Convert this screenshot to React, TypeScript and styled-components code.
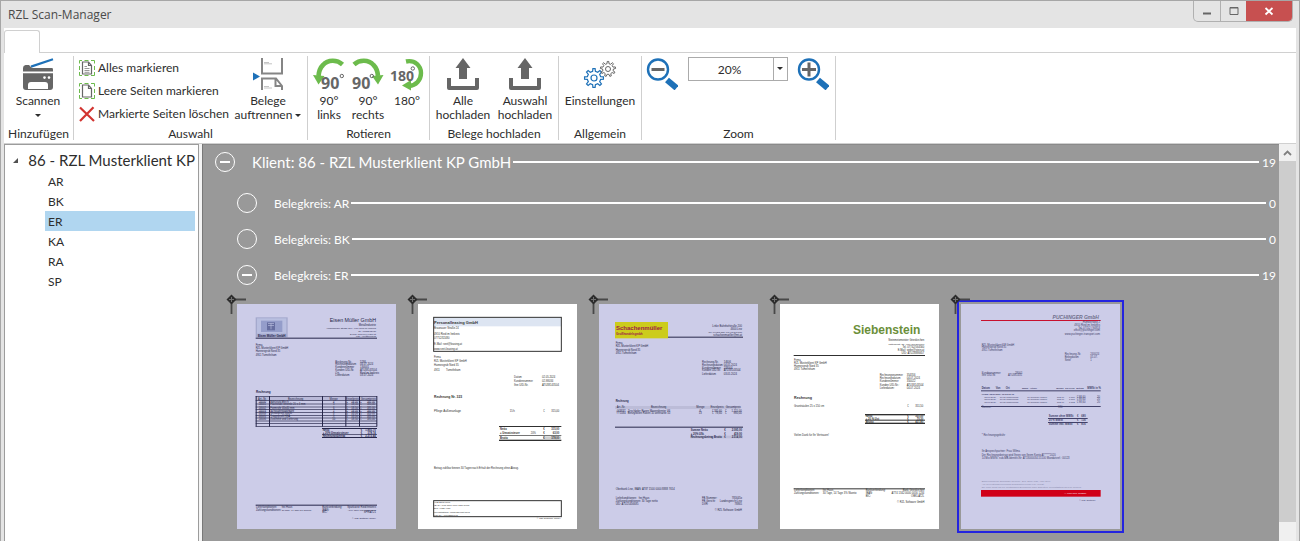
import React from 'react';
import styled, { createGlobalStyle, css } from 'styled-components';

const ink = '#2d2d2d';
const grey = '#666666';
const blue = '#1e71b8';
const green = '#6cbb4c';

const GlobalStyle = createGlobalStyle`
  *, *::before, *::after { box-sizing: border-box; }
  body {
    margin: 0;
    font-family: Lato, "Open Sans", sans-serif;
    font-size: 12px;
    color: ${ink};
    overflow: hidden;
  }
  button, select { font: inherit; color: inherit; }
`;

/* ---------- window frame ---------- */

const Window = styled.div`
  display: flex;
  flex-direction: column;
  height: 100vh;
  padding: 0 3px;
  background: #e4e4e4;
  border: 1px solid #a6a6a6;
  border-bottom: 0;
`;

const TitleBar = styled.header`
  display: flex;
  justify-content: space-between;
  align-items: flex-start;
  height: 27px;
  flex: none;
  padding: 0 3px 0 4px;
`;

const Title = styled.h1`
  margin: 0;
  font-family: "Open Sans", sans-serif;
  font-size: 12px;
  font-weight: 400;
  line-height: 28px;
  color: #4a4a4a;
`;

const WindowButtons = styled.div`
  display: flex;
  border: 1px solid #b0b0b0;
  border-top: 0;
  border-radius: 0 0 5px 5px;
  overflow: hidden;
`;

const WindowButton = styled.button<{ $close?: boolean }>`
  display: grid;
  place-items: center;
  width: ${(p) => (p.$close ? 46 : 26)}px;
  height: 20px;
  padding: 0;
  border: 0;
  border-left: ${(p) => (p.$close ? '0' : '1px solid #b0b0b0')};
  background: ${(p) => (p.$close ? '#c75050' : 'transparent')};
  &:first-child { border-left: 0; }
`;

/* ---------- ribbon ---------- */

const TabStrip = styled.nav`
  display: flex;
  align-items: flex-end;
  flex: none;
  height: 25px;
  background: #fff;
  &::after {
    content: '';
    flex: 1;
    border-bottom: 1px solid #d0d0d0;
  }
`;

const Tab = styled.button`
  width: 36px;
  height: 23px;
  padding: 0;
  border: 1px solid #d0d0d0;
  border-bottom: 0;
  border-radius: 3px 3px 0 0;
  background: #fff;
`;

const Ribbon = styled.div`
  display: flex;
  flex: none;
  padding: 3px 0;
  background: #fff;
  border-bottom: 1px solid #d0d0d0;
`;

const Group = styled.section<{ $width: number }>`
  display: flex;
  flex-direction: column;
  flex: 0 0 ${(p) => p.$width}px;
  min-width: 0;
  height: 84px;
  border-right: 1px solid #cfcfcf;
`;

const GroupBody = styled.div<{ $gap?: number }>`
  display: flex;
  flex: 1;
  gap: ${(p) => p.$gap ?? 0}px;
  align-items: flex-start;
  padding: 2px 2px 0;
`;

const GroupLabel = styled.h2`
  margin: 0;
  font-size: 12px;
  font-weight: 400;
  line-height: 12px;
  text-align: center;
  white-space: nowrap;
`;

const LargeButton = styled.button<{ $width: number }>`
  display: flex;
  flex-direction: column;
  align-items: center;
  gap: 4px;
  flex: 0 0 ${(p) => p.$width}px;
  min-width: 0;
  padding: 0;
  border: 0;
  background: none;
  line-height: 14px;
  white-space: nowrap;
  svg { display: block; overflow: visible; }
`;

const Caption = styled.span`
  display: flex;
  flex-direction: column;
  align-items: center;
`;

const CaptionLine = styled.span`
  display: flex;
  align-items: center;
  justify-content: center;
  gap: 3px;
  min-height: 14px;
`;

const SmallButtons = styled.div`
  display: flex;
  flex-direction: column;
  flex: 0 0 158px;
  margin-top: -2px;
`;

const SmallButton = styled.button`
  display: flex;
  align-items: center;
  gap: 3px;
  height: 23px;
  padding: 0 0 0 3px;
  border: 0;
  background: none;
  white-space: nowrap;
`;

const ZoomTools = styled.div`
  display: flex;
  flex: 1;
  align-items: flex-start;
  justify-content: space-between;
  padding: 0 4px 0 2px;
`;

const IconButton = styled.button`
  padding: 0;
  border: 0;
  background: none;
  svg { display: block; }
`;

const Combo = styled.label`
  display: grid;
  grid-template-columns: 1fr 14px;
  width: 100px;
  height: 24px;
  margin-top: -1px;
  border: 1px solid #ababab;
  background: #fff;
`;

const ComboSelect = styled.select`
  grid-area: 1 / 1 / 2 / 3;
  appearance: none;
  width: 100%;
  padding: 0 16px 0 0;
  border: 0;
  background: none;
  text-align: center;
  text-align-last: center;
`;

const ComboArrow = styled.span`
  grid-area: 1 / 2;
  display: grid;
  place-items: center;
  padding-bottom: 2px;
  border-left: 1px solid #ababab;
  pointer-events: none;
`;

const Caret = styled.span`
  border: 3px solid transparent;
  border-top-color: ${ink};
  border-bottom: 0;
`;

/* ---------- body ---------- */

const Main = styled.main`
  display: flex;
  flex: 1;
  gap: 3px;
  min-height: 0;
  background: #f4f4f4;
`;

const TreePanel = styled.aside`
  flex: 0 0 195px;
  min-width: 0;
  padding: 4px 3px 0 0;
  background: #fff;
  border: 1px solid #9c9c9c;
  border-bottom: 0;
`;

const TreeRoot = styled.div`
  display: flex;
  align-items: center;
  gap: 10px;
  height: 22px;
  padding: 0 0 1px 8px;
  font-size: 15px;
  white-space: nowrap;
`;

const TreeList = styled.ul`
  margin: 0;
  padding: 0 0 0 40px;
  list-style: none;
`;

const TreeItem = styled.li<{ $selected?: boolean }>`
  height: 20px;
  padding-left: 3px;
  line-height: 21px;
  ${(p) => p.$selected && css`background: #b0d6f0;`}
`;

const Viewer = styled.div`
  display: flex;
  flex: 1;
  min-width: 0;
  background: #999;
  border-left: 1px solid #787878;
  box-shadow: inset 0 1px #8a8a8a;
`;

const Canvas = styled.div`
  flex: 1;
  min-width: 0;
  overflow: hidden;
  padding: 0 3px 0 12px;
  color: #fff;
`;

const SectionRow = styled.div<{ $root?: boolean }>`
  display: flex;
  align-items: center;
  height: 36px;
  margin-bottom: ${(p) => (p.$root ? 5 : 0)}px;
  padding-left: ${(p) => (p.$root ? 0 : 22)}px;
  white-space: nowrap;
`;

const Expander = styled.button`
  display: grid;
  place-items: center;
  flex: none;
  width: 20px;
  height: 20px;
  padding: 0;
  border: 1px solid #fff;
  border-radius: 50%;
  background: none;
`;

const Minus = styled.span`
  width: 10px;
  height: 2px;
  background: #fff;
`;

const SectionTitle = styled.span<{ $root?: boolean }>`
  margin-left: 17px;
  font-size: ${(p) => (p.$root ? 15 : 12)}px;
`;

const Rule = styled.span`
  flex: 1;
  height: 2px;
  margin: 0 3px 0 2px;
  background: #fff;
`;

const Thumbs = styled.div`
  display: flex;
  gap: 14px;
  padding: 7px 0 0 18px;
`;

const Thumb = styled.button<{ $active?: boolean }>`
  position: relative;
  flex: none;
  padding: 2px;
  border: 2px solid ${(p) => (p.$active ? '#2424e0' : 'transparent')};
  background: none;
`;

const PinMark = styled.svg`
  position: absolute;
  top: -9px;
  left: -12px;
`;

const Page = styled.svg`
  display: block;
  width: 159px;
  height: 225px;
`;

const ScrollBar = styled.div`
  display: flex;
  flex-direction: column;
  flex: 0 0 17px;
  background: #f0f0f0;
`;

const ScrollArrow = styled.button`
  display: grid;
  place-items: center;
  height: 17px;
  padding: 0;
  border: 0;
  background: #f0f0f0;
`;

const ScrollThumb = styled.div`
  flex: 0 0 91%;
  background: #cdcdcd;
`;

/* ---------- icons ---------- */

const Svg32 = ({ children }: { children: React.ReactNode }) => (
  <svg width="32" height="32" viewBox="0 0 32 32" aria-hidden="true">{children}</svg>
);

const ScannerIcon = () => (
  <Svg32>
    <path d="M9 8.6 31 1.2" stroke={blue} strokeWidth="2.2" />
    <path d="M1 13.5V10q0-2.5 2.5-3H7l3 3h20.500l.5 1.500v2z" fill={grey} />
    <path d="M1 15.200h30V29q0 3-3 3H4q-3 0-3-3z" fill={grey} />
    <path d="M6 31v-4q0-3 3-3h14q3 0 3 3v4z" fill="#fff" />
    <circle cx="22.500" cy="19.600" r="1.300" fill="#fff" />
    <circle cx="27" cy="19.600" r="1.300" fill="#fff" />
  </Svg32>
);

const SelectPageIcon = ({ filled }: { filled?: boolean }) => (
  <svg width="16" height="16" viewBox="0 0 16 16" aria-hidden="true" fill="none">
    <path
      d="M.5 3.500V.5H3M5.500.5h4M12 .5h3.500v3M15.500 6v4M15.500 12v3.500H12M9.500 15.500h-4M3 15.500H.5V12M.5 10V6"
      stroke={green}
    />
    <path d="M3.500 2h6l3 3.500V14h-9zM9.500 2v3.500h3" stroke={grey} strokeWidth="1.200" />
    {filled && <path d="M5.500 6.500H8M5.500 8.500h5M5.500 10.500h5M5.500 12.300h5" stroke="#999" />}
  </svg>
);

const CrossIcon = () => (
  <svg width="16" height="16" viewBox="0 0 16 16" aria-hidden="true">
    <path d="M1 1.500 15 15M14.500 1.200 1 15" stroke="#d23430" strokeWidth="2.200" fill="none" />
  </svg>
);

const SplitIcon = () => (
  <Svg32>
    <path d="M1 14.500 8 18.500 1 22.500z" fill={blue} />
    <g fill="none" stroke="#858585" strokeWidth="2">
      <path d="M10 0v15.500h20V0" />
      <path d="M10 32V20.500h14l6 7.500V32M23.500 20.500V28H30" />
    </g>
    <path d="M12 4.500h5M12 5.800h8M12 28.500h5M12 30h8" stroke="#c4c4c4" fill="none" />
  </Svg32>
);

const IconNumber = styled.text<{ $size: number }>`
  font-family: "Open Sans", sans-serif;
  font-weight: 700;
  font-size: ${(p) => p.$size}px;
  fill: ${grey};
`;

const RotateLeftIcon = () => (
  <Svg32>
    <path d="M29.500 6.500C24 1.500 15 1.500 10 7q-4 4-4.500 11" stroke={green} strokeWidth="4.600" fill="none" />
    <path d="M0 17 11.500 18 5.500 26.500z" fill={green} />
    <IconNumber x="8" y="31" $size={16}>90</IconNumber>
    <circle cx="28.800" cy="18" r="1.700" fill="none" stroke={grey} />
  </Svg32>
);

const RotateRightIcon = () => (
  <Svg32>
    <path d="M2 6.500C7.500 1.500 16.500 1.500 21.500 7q4 4 4.500 11" stroke={green} strokeWidth="4.600" fill="none" />
    <path d="M20 18 31.500 17 26 26.500z" fill={green} />
    <IconNumber x="0" y="31" $size={16}>90</IconNumber>
    <circle cx="19.800" cy="18" r="1.700" fill="none" stroke={grey} />
  </Svg32>
);

const RotateHalfIcon = () => (
  <Svg32>
    <path d="M15 3.500C24 1.500 30 8 30 15c0 7-5 12.500-12 13" stroke={green} strokeWidth="4.400" fill="none" />
    <path d="M20 22 20 32.500 11 27.500z" fill={green} />
    <IconNumber x="-1" y="23" $size={14}>180</IconNumber>
    <circle cx="21.800" cy="10.500" r="1.700" fill="#fff" stroke={grey} />
  </Svg32>
);

const UploadIcon = () => (
  <Svg32>
    <path d="M16 0 23.500 10H20v11h-8V10H8.500z" fill={grey} />
    <path d="M2 20v10h28V20" stroke={grey} strokeWidth="4" fill="none" strokeLinejoin="round" />
  </Svg32>
);

function gearPath(cx: number, cy: number, outer: number, inner: number, teeth: number) {
  const step = (Math.PI * 2) / teeth;
  const point = (r: number, a: number) =>
    `${(cx + r * Math.cos(a)).toFixed(2)} ${(cy + r * Math.sin(a)).toFixed(2)}`;
  const parts: string[] = [];
  for (let i = 0; i < teeth; i += 1) {
    const a = i * step - Math.PI / 2;
    parts.push(point(inner, a - step * 0.26), point(outer, a - step * 0.15));
    parts.push(point(outer, a + step * 0.15), point(inner, a + step * 0.26));
  }
  return `M${parts.join('L')}Z`;
}

const GearsIcon = () => (
  <Svg32>
    <g fill="none" stroke={blue} strokeWidth="1.200">
      <path d={gearPath(10, 20, 9.5, 6.8, 8)} />
      <circle cx="10" cy="20" r="3" />
    </g>
    <g fill="none" stroke={grey}>
      <path d={gearPath(24, 11, 7.6, 5.4, 9)} />
      <circle cx="24" cy="11" r="2.500" />
    </g>
  </Svg32>
);

const MagnifierIcon = ({ plus }: { plus?: boolean }) => (
  <Svg32>
    <circle cx="12" cy="11.500" r="10" stroke={blue} strokeWidth="2.400" fill="none" />
    <path d="M21 22 30.500 30" stroke={blue} strokeWidth="6" />
    <path d={plus ? 'M5 11.500h14M12 4.500v14' : 'M5.500 11.500h13'} stroke={grey} strokeWidth="3" />
  </Svg32>
);

const Pin = () => (
  <PinMark width="26" height="24" viewBox="0 0 26 24" aria-hidden="true">
    <path d="M11 6.500h12M8.500 9v12" stroke="#484848" strokeWidth="1.800" />
    <path d="M8.500 1.500 13.500 6.500 8.500 11.500 3.500 6.500z" fill="#2c2c2c" />
    <path d="M8.500 4v5M6 6.500h5" stroke="#707070" />
  </PinMark>
);

/* ---------- scanned pages (drawn on a 477 x 675 sheet) ---------- */

type Anchor = 'start' | 'middle' | 'end';
type Line = [x: number, y: number, text: string, anchor?: Anchor, size?: number, bold?: boolean, fill?: string];
type Bar = [x: number, y: number, w: number, h: number, fill?: string];

interface Sheet {
  id: string;
  name: string;
  paper: string;
  ink: string;
  bars: Bar[];
  lines: Line[];
  frames?: Bar[];
  active?: boolean;
}

const address = (x: number, ys: number[]): Line[] => [
  [x, ys[0], 'Firma'],
  [x, ys[1], 'RZL Musterklient KP GmbH'],
  [x, ys[2], 'Hannesgrub Nord 35'],
  [x, ys[3], '4911 Tumeltsham'],
];

const pairs = (x1: number, x2: number, ys: number[], rows: [string, string][]): Line[] =>
  rows.flatMap(([a, b], i): Line[] => [[x1, ys[i], a], [x2, ys[i], b]]);

const totals = (x: number, cur: number, right: number, ys: number[], rows: [string, string][]): Line[] =>
  rows.flatMap(([a, b], i): Line[] => [
    [x, ys[i], a, 'start', 8, true],
    [cur, ys[i], '€', 'start', 8, true],
    [right, ys[i], b, 'end', 8, true],
  ]);

const sheets: Sheet[] = [
  {
    id: 'eisen',
    name: 'Eisen Müller GmbH',
    paper: '#cccce8',
    ink: '#26264a',
    bars: [
      [56, 40, 96, 60, '#a4a9cd'], [60, 43, 88, 46, '#b9bfe0'], [72, 50, 64, 34, '#949dca'],
      [90, 55, 24, 24, '#666ea0'], [93, 58, 18, 2, '#b9bfe0'], [93, 64, 18, 2, '#b9bfe0'], [101, 58, 2, 18, '#b9bfe0'],
      [56, 101, 364, 3],
      [56, 278, 364, 11, '#b9b9d8'],
      ...[276, 288, 299, 308, 316, 325, 333, 341, 350, 358, 367].map((y): Bar => [56, y, 364, 2]),
      ...[56, 96, 255, 325, 366, 418].map((x): Bar => [x, 276, 3, 92]),
      [255, 372, 165, 3], [255, 390, 165, 2], [255, 399, 165, 3],
      [56, 602, 364, 3],
    ],
    lines: [
      [104, 99, 'Eisen Müller GmbH', 'middle', 9, true],
      [417, 54, 'Eisen Müller GmbH', 'end', 16],
      [417, 66, 'Metallindustrie', 'end'],
      [417, 75, 'Vorbichlinger Straße 276, 4910 Ried im Innkreis', 'end', 7],
      [417, 84, 'Tel. 07752/12480', 'end', 7],
      [417, 92, 'E-Mail: mueller@eisen.at', 'end', 7],
      [417, 100, 'UID: ATU25666865', 'end', 7],
      ...address(56, [125, 134, 144, 156]),
      ...pairs(295, 369, [176, 183, 193, 200, 209, 216], [
        ['Rechnung-Nr.', '5286'], ['Rechnungsdatum', '04.07.2024'], ['Kundennummer', '134001'],
        ['Kunden UID-Nr.', 'ATU38143504'], ['Ort', 'Ried im Innkreis'], ['Lieferdatum', '03.07.2024'],
      ]),
      [57, 267, 'Rechnung', 'start', 9, true],
      [76, 287, 'Art.-Nr.', 'middle'], [176, 287, 'Bezeichnung', 'middle'], [290, 287, 'Menge', 'middle'],
      [346, 287, 'Einzelpreis', 'middle'], [394, 287, 'Gesamtpreis', 'middle'],
      ...['Edelstahl Blech', 'Flachstahl verzinkt 20 x 4 mm', 'Formrohr 40x40 mm', 'Schraubensortiment', 'Winkelprofil 30x30', 'Trägerprofil HEA', 'Zuschnitt und Lieferung']
        .flatMap((text, i): Line[] => {
          const y = [297, 303, 314, 323, 331, 339, 347][i];
          return [
            [76, y, `2400${i}`, 'middle', 8], [100, y, text, 'start', 8], [290, y, `${i + 4}`, 'middle', 8],
            [328, y, '€', 'start', 8], [363, y, '18,50', 'end', 8], [369, y, '€', 'start', 8], [414, y, '185,00', 'end', 8],
          ];
        }),
      ...totals(257, 371, 416, [382, 390, 398], [['Netto', '1.893,70'], ['+ 20% Umsatzsteuer', '378,74'], ['Rechnungsbetrag', '2.272,44']]),
      [57, 611, 'Lieferkonditionen:'], [134, 611, 'frei Haus'], [256, 611, 'Bankverbindung:'], [417, 611, 'Sparkasse Ried/Innkreis', 'end'],
      [57, 620, 'Zahlungskonditionen:'], [134, 620, '30 Tage, 14 Tage 3% Skonto', 'start', 7], [256, 620, 'IBAN:'], [417, 620, 'AT74 1200 0034 5111 2345', 'end', 7],
      [256, 628, 'BIC:'], [417, 628, 'SPRIAT21', 'end'],
      [417, 645, '© RZL Software GmbH', 'end', 7],
    ],
  },
  {
    id: 'personal',
    name: 'Personalleasing GmbH',
    paper: '#ffffff',
    ink: '#303030',
    frames: [[47, 40, 383, 102], [47, 590, 383, 48]],
    bars: [
      [48, 41, 381, 26, '#dde5f2'],
      [243, 366, 187, 3], [243, 393, 187, 2], [243, 407, 187, 4], [375, 397, 54, 9, '#d0d0d0'],
    ],
    lines: [
      [48, 59, 'Personalleasing GmbH', 'start', 12, true],
      [48, 75, 'Braunauer Straße 24'], [48, 92, '4910 Ried im Innkreis'], [48, 106, '07752/32480'],
      [48, 123, 'E-Mail: rzeit@leasing.at'], [48, 137, 'www.rzeit-leasing.at'],
      [48, 163, 'Firma'], [48, 175, 'RZL Musterklient KP GmbH'], [48, 187, 'Hannesgrub Nord 35'], [48, 200, '4911'], [84, 200, 'Tumeltsham'],
      ...pairs(288, 372, [221, 234, 246], [['Datum', '02.05.2024'], ['Kundennummer', '02-98034'], ['Ihre UID-Nr.', 'ATU38143504']]),
      [48, 282, 'Rechnung Nr. 323', 'start', 10, true],
      [48, 323, 'Pflege Außenanlage', 'start', 9], [275, 323, '15 h'], [376, 323, '€'], [424, 323, '315,00', 'end'],
      ...totals(246, 376, 424, [377, 389, 404], [['Netto', '315,00'], ['+ Umsatzsteuer', '63,00'], ['Brutto', '378,00']]),
      [338, 389, '20%'],
      [48, 496, 'Betrag zahlbar binnen 30 Tagen nach Erhalt der Rechnung ohne Abzug.'],
      [48, 598, 'VKB Bank Ried', 'start', 7], [48, 607, 'IBAN: AT78 1860 0000 1234 5678', 'start', 7],
      [48, 616, 'BIC: VKBLAT2L', 'start', 7], [48, 626, 'Gerichtsstand: Landesgericht Ried', 'start', 7], [48, 635, 'UID-Nr.: ATU62587145', 'start', 7],
      [428, 645, '© RZL Software GmbH', 'end', 7],
    ],
  },
  {
    id: 'schachen',
    name: 'Schachenmüller',
    paper: '#cccce8',
    ink: '#28284a',
    bars: [
      [207, 98, 225, 3], [48, 54, 159, 49, '#cccc1c'],
      [48, 306, 376, 9, '#bcbcd8'], [48, 368, 384, 3], [274, 395, 158, 8, '#bcbcd8'],
    ],
    lines: [
      [51, 79, 'Schachenmüller', 'start', 18, true, '#9c2048'],
      [51, 93, 'Großhandelsgmbh', 'start', 9, true, '#9c2048'],
      [429, 70, 'Linke Bahnhofstraße 200', 'end'], [429, 79, '4600 Linz', 'end'],
      [429, 88, 'Tel: 0043/5 888, Fax 05 895 887', 'end', 7], [429, 97, 'schachenmueller@mt.at', 'end'],
      ...address(50, [120, 130, 140, 150]),
      ...pairs(309, 374, [176, 186, 195, 202, 212], [
        ['Rechnung-Nr.', '14606'], ['Rechnungsdatum', '04.05.2024'], ['Kundennummer', '233004'],
        ['Kunden UID-Nr.', 'ATU38143504'], ['Lieferdatum', '03.05.2024'],
      ]),
      [50, 294, 'Rechnung', 'start', 8, true],
      [66, 313, 'Art.-Nr.', 'middle'], [179, 313, 'Bezeichnung', 'middle'], [304, 313, 'Menge', 'middle'], [354, 313, 'Einzelpreis', 'middle'], [403, 313, 'Gesamtpreis', 'middle'],
      [66, 323, 'GI3837', 'middle'], [86, 323, 'Zirschleifer Rasen Mosentfernter V6', 'start', 8], [304, 323, '6', 'middle'], [339, 323, '€'], [369, 323, '185,60', 'end'], [378, 323, '€'], [428, 323, '1.115,00', 'end'],
      [66, 330, 'YY1084', 'middle'], [86, 330, 'Benzylfolien Rasen 10 anthrazite 50', 'start', 8], [304, 330, '13', 'middle'], [339, 330, '€'], [369, 330, '78,60', 'end'], [378, 330, '€'], [428, 330, '980,00', 'end'],
      ...totals(275, 376, 429, [380, 393, 402], [['Summe Netto', '2.095,00'], ['+ 20% USt.', '419,00'], ['Rechnungsbetrag Brutto', '2.514,00']]),
      [50, 558, 'Oberbank Linz, IBAN: AT87 1500 0000 8888 7654', 'start', 8],
      [50, 584, 'Lieferkonditionen:'], [119, 584, 'frei Haus'], [50, 594, 'Zahlungskonditionen: 30 Tage netto'], [50, 603, 'UID: ATU25456685'],
      [309, 584, 'FB-Nummer:'], [429, 584, '785645x', 'end'], [309, 594, 'FB-Gericht:'], [429, 594, 'Landesgericht Linz', 'end'], [309, 603, 'DVR:'], [429, 603, '78865', 'end'],
      [429, 620, '© RZL Software GmbH', 'end'],
    ],
  },
  {
    id: 'sieben',
    name: 'Siebenstein',
    paper: '#ffffff',
    ink: '#303030',
    bars: [
      [41, 153, 394, 3],
      [255, 330, 180, 4], [255, 347, 180, 3], [255, 356, 180, 4],
      [41, 553, 394, 3],
    ],
    lines: [
      [421, 90, 'Siebenstein', 'end', 36, true, '#6b8f3a'],
      [433, 112, 'Steinmetzmeister Grieskirchen', 'end'], [433, 122, 'Pöttingerstr. 23, 4710 Grieskirchen', 'end', 7],
      [433, 132, 'Tel. 07742/564560', 'end'], [433, 142, 'E-Mail: siebe@stein.at', 'end'], [433, 151, 'UID: ATU28886657', 'end'],
      ...address(42, [171, 180, 190, 198]),
      ...pairs(299, 380, [216, 226, 235, 245, 255], [
        ['Rechnungsnummer', '354356'], ['Rechnungsdatum', '04.07.2024'], ['Kundennummer', '350022'],
        ['Kunden UID-Nr.:', 'ATU38143504'], ['Lieferdatum:', '04.07.2024'],
      ]),
      [42, 286, 'Rechnung', 'start', 11, true],
      [42, 308, 'Granitsäulen 25 x 150 cm'], [382, 310, '€'], [430, 310, '351,50', 'end'],
      ...totals(257, 382, 430, [338, 347, 356], [['Netto', '351,50'], ['+ 20 % Ust', '70,30'], ['Brutto', '421,80']]),
      [42, 395, 'Vielen Dank für Ihr Vertrauen!'],
      [42, 562, 'Lieferkonditionen:'], [128, 562, 'frei Haus'], [257, 562, 'Bankverbindung:'], [433, 562, 'Bank Grieskirchen', 'end'],
      [42, 571, 'Zahlungskonditionen:'], [128, 571, '30 Tage, 14 Tage 3% Skonto'], [257, 571, 'IBAN:'], [433, 571, 'AT74 1342 0000 0056 1234', 'end', 8],
      [257, 580, 'BIC:'], [433, 580, 'OBKLAT2L', 'end'],
      [433, 598, '© RZL Software GmbH', 'end'],
    ],
  },
  {
    id: 'puchinger',
    name: 'PUCHINGER GmbH',
    paper: '#cccce8',
    ink: '#404068',
    active: true,
    bars: [
      [60, 48, 359, 3, '#c8102e'],
      [60, 259, 359, 3], [60, 306, 359, 3],
      [261, 342, 119, 3], [261, 354, 119, 3],
      [60, 558, 359, 20, '#d00018'],
    ],
    lines: [
      [414, 44, 'PUCHINGER GmbH', 'end', 15, true, '#70708c'],
      [417, 58, 'Humbertweg 2', 'end'], [417, 66, '4910 Ried im Innkreis', 'end'], [417, 75, 'Tel. 07752 / 94853', 'end'], [417, 82, 'office@puchinger.com', 'end'], [417, 92, 'www.puchinger-transport.com', 'end'],
      [62, 125, 'RZL Musterklient KP GmbH'], [62, 132, 'Hannesgrub Nord 35'], [62, 140, '4911 Tumeltsham'],
      ...pairs(311, 388, [154, 163, 170], [['Rechnung-Nr.', '240024'], ['Belegdatum', '05.07.'], ['Seite', '1']]),
      [62, 210, 'Kundennummer'], [162, 210, '28001'], [62, 217, 'Ihre UID-Nr.'], [141, 217, 'ATU381435'],
      [62, 255, 'Datum', 'start', 8, true], [104, 255, 'Von', 'start', 8, true], [134, 255, 'Ort', 'start', 8, true], [183, 255, 'Mann', 'start', 7, true], [206, 255, 'Artikel', 'start', 7, true],
      [286, 255, 'Menge', 'start', 7, true], [313, 255, 'Eh Preis', 'start', 7, true], [346, 255, 'Betrag', 'start', 7, true], [379, 255, 'MWSt in %', 'start', 8, true],
      [62, 274, 'Firma: 05/07/2024 10:05  06.10', 'start', 7, true],
      ...[282, 289, 296].flatMap((y, i): Line[] => [
        [70, y, '05/07/2024', 'start', 7], [116, y, '10:05 Musterfirma', 'start', 7], [199, y, '10 Rollware Rasen', 'start', 7],
        [288, y, '862,00', 'start', 7], [324, y, `1.80${i}`, 'start', 7], [347, y, '€  98,60', 'start', 8], [417, y, '20', 'end', 8],
      ]),
      [62, 313, 'Summe:'], [291, 313, '980'],
      ...totals(263, 348, 374, [340, 352, 364], [['Summe ohne MWSt', '680'], ['20 % MWSt', '136'], ['Summe inkl. MWSt', '816']]),
      [62, 397, '* Rechnungsgebühr'],
      [62, 443, 'Ihr Ansprechpartner: Frau Wilma'],
      [62, 457, 'Der Rechnungsbetrag wird Ihnen von Ihrem Konto AT*****2020'],
      [62, 466, '14 Mio MWSt. sub-MB-Identifit-Nr: AT13000034-55100  Mandatsref.: 00123'],
      [62, 535, 'Bankverbindung: Sparkasse Ried/Inn., BIC: SPRIAT21, AT34 2040', 'start', 7, false, '#8888a8'],
      [62, 544, 'Alle im Leistungsverzeichnis angeführten Preise exkl. MWSt.', 'start', 7, false, '#8888a8'],
      [62, 552, 'Die Ware bleibt bis zur vollständigen Bezahlung unser Eigentum. Gerichtsstand Ried im Innkreis.', 'start', 7, false, '#8888a8'],
      [376, 571, '— eine Idee voraus!', 'end', 7, true, '#f0c8d0'],
      [404, 592, '© RZL Software', 'end', 7],
    ],
  },
];

const SheetText = styled.text<{ $size: number; $bold?: boolean; $italic?: boolean }>`
  font-family: "Liberation Sans", Arial, sans-serif;
  font-size: ${(p) => p.$size}px;
  font-weight: ${(p) => (p.$bold ? 700 : 400)};
  font-style: ${(p) => (p.$italic ? 'italic' : 'normal')};
`;

const ScannedPage = ({ sheet }: { sheet: Sheet }) => (
  <Page viewBox="0 0 477 675" role="img" aria-label={sheet.name}>
    <rect width="477" height="675" fill={sheet.paper} />
    {sheet.bars.map(([x, y, w, h, fill], i) => (
      <rect key={i} x={x} y={y} width={w} height={h} fill={fill ?? sheet.ink} />
    ))}
    {sheet.frames?.map(([x, y, w, h], i) => (
      <rect key={i} x={x} y={y} width={w} height={h} fill="none" stroke={sheet.ink} strokeWidth="3" />
    ))}
    {sheet.lines.map(([x, y, text, anchor, size, bold, fill], i) => (
      <SheetText
        key={i}
        x={x}
        y={y}
        textAnchor={anchor ?? 'start'}
        fill={fill ?? sheet.ink}
        $size={size ?? 8}
        $bold={bold}
        $italic={sheet.id === 'puchinger' && size === 15}
      >
        {text}
      </SheetText>
    ))}
  </Page>
);

/* ---------- composition ---------- */

interface ToolProps {
  icon: React.ReactNode;
  lines: string[];
  width: number;
  caret?: boolean;
}

const Tool = ({ icon, lines, width, caret }: ToolProps) => (
  <LargeButton type="button" $width={width}>
    {icon}
    <Caption>
      {lines.map((line, i) => (
        <CaptionLine key={i}>
          {line}
          {caret && i === lines.length - 1 && <Caret />}
        </CaptionLine>
      ))}
    </Caption>
  </LargeButton>
);

interface SectionProps {
  title: string;
  count: number;
  open?: boolean;
  root?: boolean;
}

const Section = ({ title, count, open, root }: SectionProps) => (
  <SectionRow $root={root}>
    <Expander type="button" aria-label={title} aria-expanded={!!open}>
      {open && <Minus />}
    </Expander>
    <SectionTitle $root={root}>{title}</SectionTitle>
    <Rule />
    <span>{count}</span>
  </SectionRow>
);

export default function App() {
  return (
    <Window>
      <GlobalStyle />
      <TitleBar>
        <Title>RZL Scan-Manager</Title>
        <WindowButtons>
          <WindowButton type="button" aria-label="Minimieren">
            <svg width="10" height="10" aria-hidden="true"><path d="M1 7.500h8" stroke="#666" strokeWidth="2" /></svg>
          </WindowButton>
          <WindowButton type="button" aria-label="Maximieren">
            <svg width="10" height="10" aria-hidden="true"><path d="M1 1.500h8v7H1zM1 2h8" stroke="#666" fill="none" /></svg>
          </WindowButton>
          <WindowButton type="button" aria-label="Schließen" $close>
            <svg width="10" height="10" aria-hidden="true"><path d="M1.500 2 8.500 8.500M8.500 2 1.500 8.500" stroke="#fff" strokeWidth="1.800" /></svg>
          </WindowButton>
        </WindowButtons>
      </TitleBar>

      <TabStrip><Tab type="button" aria-label="Start" /></TabStrip>

      <Ribbon>
        <Group $width={70}>
          <GroupBody>
            <Tool width={64} icon={<ScannerIcon />} lines={['Scannen', '']} caret />
          </GroupBody>
          <GroupLabel>Hinzufügen</GroupLabel>
        </Group>
        <Group $width={234}>
          <GroupBody>
            <SmallButtons>
              <SmallButton type="button"><SelectPageIcon filled />Alles markieren</SmallButton>
              <SmallButton type="button"><SelectPageIcon />Leere Seiten markieren</SmallButton>
              <SmallButton type="button"><CrossIcon />Markierte Seiten löschen</SmallButton>
            </SmallButtons>
            <Tool width={68} icon={<SplitIcon />} lines={['Belege', 'auftrennen']} caret />
          </GroupBody>
          <GroupLabel>Auswahl</GroupLabel>
        </Group>
        <Group $width={122}>
          <GroupBody $gap={1}>
            <Tool width={38} icon={<RotateLeftIcon />} lines={['90°', 'links']} />
            <Tool width={38} icon={<RotateRightIcon />} lines={['90°', 'rechts']} />
            <Tool width={38} icon={<RotateHalfIcon />} lines={['180°']} />
          </GroupBody>
          <GroupLabel>Rotieren</GroupLabel>
        </Group>
        <Group $width={129}>
          <GroupBody>
            <Tool width={62} icon={<UploadIcon />} lines={['Alle', 'hochladen']} />
            <Tool width={62} icon={<UploadIcon />} lines={['Auswahl', 'hochladen']} />
          </GroupBody>
          <GroupLabel>Belege hochladen</GroupLabel>
        </Group>
        <Group $width={83}>
          <GroupBody>
            <Tool width={78} icon={<GearsIcon />} lines={['Einstellungen']} />
          </GroupBody>
          <GroupLabel>Allgemein</GroupLabel>
        </Group>
        <Group $width={194}>
          <GroupBody>
            <ZoomTools>
              <IconButton type="button" aria-label="Verkleinern"><MagnifierIcon /></IconButton>
              <Combo>
                <ComboSelect aria-label="Zoom" defaultValue="20%">
                  <option>20%</option>
                </ComboSelect>
                <ComboArrow><Caret /></ComboArrow>
              </Combo>
              <IconButton type="button" aria-label="Vergrößern"><MagnifierIcon plus /></IconButton>
            </ZoomTools>
          </GroupBody>
          <GroupLabel>Zoom</GroupLabel>
        </Group>
      </Ribbon>

      <Main>
        <TreePanel>
          <TreeRoot>
            <svg width="6" height="6" aria-hidden="true"><path d="M6 0v6H0z" fill="#505050" /></svg>
            86 - RZL Musterklient KP
          </TreeRoot>
          <TreeList>
            {['AR', 'BK', 'ER', 'KA', 'RA', 'SP'].map((code) => (
              <TreeItem key={code} $selected={code === 'ER'}>{code}</TreeItem>
            ))}
          </TreeList>
        </TreePanel>
        <Viewer>
          <Canvas>
            <Section root open title="Klient: 86 - RZL Musterklient KP GmbH" count={19} />
            <Section title="Belegkreis: AR" count={0} />
            <Section title="Belegkreis: BK" count={0} />
            <Section open title="Belegkreis: ER" count={19} />
            <Thumbs>
              {sheets.map((sheet) => (
                <Thumb key={sheet.id} type="button" $active={sheet.active}>
                  <ScannedPage sheet={sheet} />
                  <Pin />
                </Thumb>
              ))}
            </Thumbs>
          </Canvas>
          <ScrollBar>
            <ScrollArrow type="button" aria-label="Nach oben">
              <svg width="9" height="6" aria-hidden="true"><path d="M1 5 4.500 1.500 8 5" stroke="#808080" strokeWidth="1.800" fill="none" /></svg>
            </ScrollArrow>
            <ScrollThumb />
          </ScrollBar>
        </Viewer>
      </Main>
    </Window>
  );
}
